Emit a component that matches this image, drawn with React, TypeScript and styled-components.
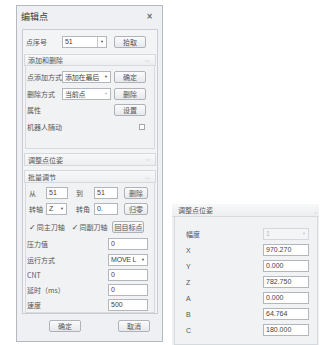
import React from 'react';
import styled, { createGlobalStyle } from 'styled-components';

const GlobalStyle = createGlobalStyle`
    body {
        margin: 0;
        background: #ffffff;
        font-family: "Noto Sans CJK SC", "Noto Sans", sans-serif;
        color: #4a4a4a;
    }
`;

const Page = styled.div`
    display: flex;
    align-items: flex-start;
    width: 328px;
    height: 345px;
    overflow: hidden;
`;

const Dialog = styled.div`
    box-sizing: border-box;
    width: 147px;
    height: 337px;
    margin: 5px 0 0 16px;
    border: 1px solid #b4b9c1;
    background: #eef0f3;
    display: flex;
    flex-direction: column;
`;

const TitleBar = styled.div`
    height: 20px;
    padding: 0 9px 0 4px;
    display: flex;
    align-items: center;
    justify-content: space-between;
    font-size: 9px;
    color: #3a3a3a;
`;

const CloseMark = styled.span`
    font-family: "DejaVu Sans", sans-serif;
    font-size: 8px;
    font-weight: bold;
    color: #666;
`;

const Body = styled.div`
    padding: 3px 4px 0 5px;
`;

const Panel = styled.div`
    box-sizing: border-box;
    height: 285px;
    border: 1px solid #c9cdd3;
    background: #f3f4f6;
    display: flex;
    flex-direction: column;
`;

const Row = styled.div<{ $h: number; $pl?: number }>`
    height: ${p => p.$h}px;
    padding-left: ${p => p.$pl ?? 3}px;
    display: flex;
    align-items: center;
    flex-shrink: 0;
`;

const Label = styled.span<{ $w?: number; $ml?: number }>`
    width: ${p => (p.$w ? `${p.$w}px` : 'auto')};
    margin-left: ${p => p.$ml ?? 0}px;
    font-size: 7px;
    color: #555;
    white-space: nowrap;
    flex-shrink: 0;
`;

const Input = styled.div<{ $w: number; $disabled?: boolean }>`
    box-sizing: border-box;
    width: ${p => p.$w}px;
    height: 12px;
    border: 1px solid ${p => (p.$disabled ? '#d4d7db' : '#b3b7bd')};
    background: ${p => (p.$disabled ? '#f4f5f6' : '#ffffff')};
    color: ${p => (p.$disabled ? '#b8bbbf' : '#444')};
    font-family: "Liberation Sans", "Noto Sans CJK SC", sans-serif;
    font-size: 7px;
    line-height: 10px;
    padding-left: 2px;
    display: flex;
    align-items: center;
    flex-shrink: 0;
`;

const SelectText = styled.span`
    flex: 1;
    white-space: nowrap;
    overflow: hidden;
    font-family: "Noto Sans CJK SC", "Liberation Sans", sans-serif;
    letter-spacing: -0.2px;
`;

const Arrow = styled.span<{ $split?: boolean; $faint?: boolean }>`
    width: 8px;
    height: 100%;
    display: flex;
    align-items: center;
    justify-content: center;
    border-left: ${p => (p.$split ? '1px solid #c6cad0' : 'none')};
    font-size: 4px;
    color: ${p => (p.$faint ? '#c0c3c7' : '#555')};
    flex-shrink: 0;
`;

const Button = styled.div<{ $w?: number; $ml?: number }>`
    box-sizing: border-box;
    width: ${p => p.$w ?? 32}px;
    height: 12px;
    margin-left: ${p => p.$ml ?? 0}px;
    border: 1px solid #afb3b9;
    border-radius: 2px;
    background: linear-gradient(#fbfbfc, #e6e8eb);
    font-size: 7px;
    color: #555;
    display: flex;
    align-items: center;
    justify-content: center;
    white-space: nowrap;
    flex-shrink: 0;
`;

const SectionHeader = styled.div<{ $h: number; $mt?: number }>`
    box-sizing: border-box;
    height: ${p => p.$h}px;
    margin: ${p => p.$mt ?? 0}px 1px 0 1px;
    padding: 0 5px 0 3px;
    border: 1px solid #d6d9dd;
    background: linear-gradient(#f8f9fa, #eceef0);
    display: flex;
    align-items: center;
    justify-content: space-between;
    font-size: 7px;
    color: #555;
    flex-shrink: 0;
`;

const Chevron = styled.span`
    font-family: "DejaVu Sans", sans-serif;
    font-size: 5px;
    color: #a3a8af;
`;

const SectionBody = styled.div<{ $h: number; $pt?: number }>`
    box-sizing: border-box;
    height: ${p => p.$h}px;
    margin: 0 2px;
    padding-top: ${p => p.$pt ?? 0}px;
    border: 1px solid #d6d9dd;
    border-top: none;
    background: #f1f2f4;
    flex-shrink: 0;
`;

const Spacer = styled.div<{ $w?: number }>`
    flex: ${p => (p.$w ? `0 0 ${p.$w}px` : '1')};
`;

const CheckBox = styled.span`
    box-sizing: border-box;
    width: 6px;
    height: 6px;
    margin-right: 9px;
    border: 1px solid #a3a8ae;
    background: #fff;
`;

const Tick = styled.span<{ $ml?: number }>`
    margin-left: ${p => p.$ml ?? 0}px;
    font-size: 7px;
    color: #555;
    white-space: nowrap;
    flex-shrink: 0;
    &::before {
        content: '✓';
        font-family: "DejaVu Sans", sans-serif;
        font-size: 8px;
        margin-right: 1px;
        color: #444;
    }
`;

const Footer = styled.div`
    display: flex;
    padding: 6px 0 0 32px;
    gap: 37px;
`;

const PosePanel = styled.div`
    box-sizing: border-box;
    width: 147px;
    height: 145px;
    margin: 204px 0 0 9px;
    background: #eef0f3;
    display: flex;
    flex-direction: column;
`;

const PoseHeader = styled.div`
    height: 12px;
    padding: 0 3px 0 6px;
    border-bottom: 1px solid #d6d9dd;
    background: linear-gradient(#f7f8f9, #eceef0);
    display: flex;
    align-items: center;
    justify-content: space-between;
    font-size: 7px;
    color: #555;
`;

const Grip = styled.span`
    font-size: 5px;
    color: #a5aab1;
`;

const PoseBody = styled.div`
    box-sizing: border-box;
    margin: 0 1px 0 2px;
    padding-top: 8px;
    height: 128px;
    border: 1px solid #d6d9dd;
    border-top: none;
    background: #f1f2f4;
`;

const poseRows = [
    { k: 'X', v: '970.270' },
    { k: 'Y', v: '0.000' },
    { k: 'Z', v: '782.750' },
    { k: 'A', v: '0.000' },
    { k: 'B', v: '64.764' },
    { k: 'C', v: '180.000' },
];

const speedRows = [
    { k: '压力值', v: '0' },
    { k: 'CNT', v: '0' },
    { k: '延时（ms）', v: '0' },
    { k: '速度', v: '500' },
];

const latin = { fontFamily: '"Liberation Sans", sans-serif' };

const App: React.FC = () => {
    return (
        <Page>
            <GlobalStyle />
            <Dialog>
                <TitleBar>
                    <span>编辑点</span>
                    <CloseMark>×</CloseMark>
                </TitleBar>
                <Body>
                    <Panel>
                        <Row $h={24}>
                            <Label $w={36}>点序号</Label>
                            <Input $w={45}>
                                <SelectText style={latin}>51</SelectText>
                                <Arrow $split>▼</Arrow>
                            </Input>
                            <Button $ml={7}>拾取</Button>
                        </Row>

                        <SectionHeader $h={12}>
                            <span>添加和删除</span>
                            <Chevron>︿</Chevron>
                        </SectionHeader>
                        <SectionBody $h={83} $pt={3}>
                            <Row $h={16} $pl={1}>
                                <Label $w={35}>点添加方式</Label>
                                <Input $w={49}>
                                    <SelectText>添加在最后</SelectText>
                                    <Arrow>▼</Arrow>
                                </Input>
                                <Button $ml={3}>确定</Button>
                            </Row>
                            <Row $h={17} $pl={1}>
                                <Label $w={35}>删除方式</Label>
                                <Input $w={49}>
                                    <SelectText>当前点</SelectText>
                                    <Arrow $faint>▼</Arrow>
                                </Input>
                                <Button $ml={3}>删除</Button>
                            </Row>
                            <Row $h={15} $pl={1}>
                                <Label>属性</Label>
                                <Spacer />
                                <Button>设置</Button>
                                <Spacer $w={8} />
                            </Row>
                            <Row $h={20} $pl={1}>
                                <Label>机器人随动</Label>
                                <Spacer />
                                <CheckBox />
                            </Row>
                        </SectionBody>

                        <SectionHeader $h={13} $mt={4}>
                            <span>调整点位姿</span>
                            <Chevron>﹀</Chevron>
                        </SectionHeader>
                        <SectionHeader $h={13} $mt={4}>
                            <span>批量调节</span>
                            <Chevron>︿</Chevron>
                        </SectionHeader>
                        <SectionBody $h={130} $pt={2}>
                            <Row $h={16} $pl={3}>
                                <Label $w={17}>从</Label>
                                <Input $w={22}>51</Input>
                                <Label $w={18} $ml={8}>到</Label>
                                <Input $w={24}>51</Input>
                                <Button $w={24} $ml={6}>删除</Button>
                            </Row>
                            <Row $h={16} $pl={3}>
                                <Label $w={17}>转轴</Label>
                                <Input $w={21}>
                                    <SelectText style={latin}>Z</SelectText>
                                    <Arrow>▼</Arrow>
                                </Input>
                                <Label $w={18} $ml={9}>转角</Label>
                                <Input $w={24}>0.</Input>
                                <Button $w={24} $ml={6}>归零</Button>
                            </Row>
                            <Row $h={19} $pl={3}>
                                <Tick>同主刀轴</Tick>
                                <Tick $ml={7}>同副刀轴</Tick>
                                <Button $ml={5}>回目标点</Button>
                            </Row>
                            <Row $h={16} $pl={1}>
                                <Label $w={81}>{speedRows[0].k}</Label>
                                <Input $w={40}>{speedRows[0].v}</Input>
                            </Row>
                            <Row $h={15} $pl={1}>
                                <Label $w={81}>运行方式</Label>
                                <Input $w={40}>
                                    <SelectText style={latin}>MOVE L</SelectText>
                                    <Arrow>▼</Arrow>
                                </Input>
                            </Row>
                            {speedRows.slice(1).map(r => (
                                <Row $h={15} $pl={1} key={r.k}>
                                    <Label $w={81}>{r.k}</Label>
                                    <Input $w={40}>{r.v}</Input>
                                </Row>
                            ))}
                        </SectionBody>
                    </Panel>
                </Body>
                <Footer>
                    <Button>确定</Button>
                    <Button>取消</Button>
                </Footer>
            </Dialog>

            <PosePanel>
                <PoseHeader>
                    <span>调整点位姿</span>
                    <Grip>⌟</Grip>
                </PoseHeader>
                <PoseBody>
                    <Row $h={17} $pl={11}>
                        <Label $w={77}>幅度</Label>
                        <Input $w={46} $disabled>
                            <SelectText style={latin}>1</SelectText>
                            <Arrow $faint>▼</Arrow>
                        </Input>
                    </Row>
                    {poseRows.map(r => (
                        <Row $h={16} $pl={11} key={r.k}>
                            <Label $w={77} style={latin}>{r.k}</Label>
                            <Input $w={46}>{r.v}</Input>
                        </Row>
                    ))}
                </PoseBody>
            </PosePanel>
        </Page>
    );
};

export default App;
